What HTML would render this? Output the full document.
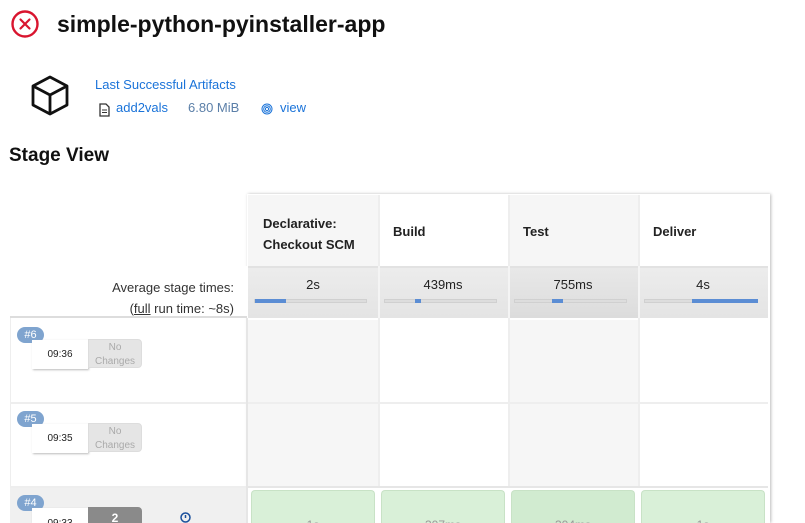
<!DOCTYPE html>
<html><head><style>
*{margin:0;padding:0;box-sizing:border-box}
html,body{width:805px;height:523px;overflow:hidden}
body{background:#fff;font-family:"Liberation Sans",sans-serif;position:relative;color:#222}
.a{position:absolute}
.link{color:#1a73d9}
.hd{font-weight:bold;font-size:13px;color:#222}
.track{position:absolute;height:4px;background:#ddd;border:1px solid #d0d0d0}
.fill{position:absolute;height:4px;background:#5b8dd4;top:-1px}
.badge{position:absolute;left:17px;width:27px;height:16px;border-radius:8px;background:#7fa4cf;color:#fff;font-size:11px;text-align:center;line-height:16px}
.time{position:absolute;left:32px;width:56px;height:29px;background:#fff;box-shadow:1px 1px 2px #bbb;font-size:10px;text-align:center;line-height:29px;color:#222}
.nc{position:absolute;left:88px;width:54px;height:29px;background:#e5e5e5;border-radius:0 4px 4px 0;color:#aaa;font-size:10px;text-align:center;line-height:14px;padding-top:1px;border:1px solid #ddd}
.cell{position:absolute;height:84px}
.g{position:absolute;height:33px;overflow:hidden;background:#d9f0d8;border:1px solid #c8e2c6;border-bottom:none;border-radius:4px 4px 0 0;color:#999;font-size:12px;text-align:center;padding-top:27px}
</style></head><body>
<svg class="a" style="left:10px;top:9px" width="30" height="30" viewBox="0 0 30 30"><circle cx="15" cy="15" r="12.5" fill="none" stroke="#d9152f" stroke-width="2.4"/><path d="M10.5 10.5l9 9M19.5 10.5l-9 9" stroke="#d9152f" stroke-width="2.2" stroke-linecap="round"/></svg>
<div class="a" style="left:57px;top:11px;font-size:23px;font-weight:bold;color:#111">simple-python-pyinstaller-app</div>
<svg class="a" style="left:29px;top:74px" width="42" height="42" viewBox="0 0 42 42"><path d="M21 3L38 12V31L21 40L4 31V12Z M4 12L21 21L38 12 M21 21V40" fill="none" stroke="#111" stroke-width="2.8" stroke-linejoin="round"/></svg>
<div class="a link" style="left:95px;top:77px;font-size:13px">Last Successful Artifacts</div>
<svg class="a" style="left:99px;top:103px" width="11" height="14" viewBox="0 0 11 14"><path d="M1 1H7L10 4V13H1Z" fill="none" stroke="#333" stroke-width="1.3"/><path d="M3 7h5M3 9.5h5" stroke="#333"/></svg>
<div class="a link" style="left:116px;top:100px;font-size:13px">add2vals</div>
<div class="a" style="left:188px;top:100px;font-size:13px;color:#5b7fa8">6.80 MiB</div>
<svg class="a" style="left:261px;top:102px" width="12" height="14" viewBox="0 0 12 14"><g fill="none" stroke="#1a73d9" stroke-width="1"><circle cx="6" cy="7" r="5"/><circle cx="6" cy="7" r="3.3"/><circle cx="6" cy="7" r="1.6"/></g></svg>
<div class="a link" style="left:280px;top:100px;font-size:13px">view</div>
<div class="a" style="left:9px;top:145px;font-size:19px;font-weight:bold;color:#111">Stage View</div>

<div class="a" style="left:247px;top:194px;width:523px;height:329px;box-shadow:1px 0 3px #bbb"></div>
<div class="a" style="left:248px;top:195px;width:130px;height:71px;background:#f6f6f6"></div>
<div class="a" style="left:378px;top:195px;width:130px;height:71px;background:#fff;border-left:2px solid #eee"></div>
<div class="a" style="left:508px;top:195px;width:130px;height:71px;background:#f6f6f6;border-left:2px solid #eee"></div>
<div class="a" style="left:638px;top:195px;width:130px;height:71px;background:#fff;border-left:2px solid #eee"></div>
<div class="a hd" style="left:263px;top:213px;line-height:21px">Declarative:<br>Checkout SCM</div>
<div class="a hd" style="left:393px;top:224px">Build</div>
<div class="a hd" style="left:523px;top:224px">Test</div>
<div class="a hd" style="left:653px;top:224px">Deliver</div>

<div class="a" style="left:10px;top:266px;width:237px;height:52px;background:#fff;border-bottom:2px solid #ddd"></div>
<div class="a" style="left:10px;top:277px;width:224px;text-align:right;font-size:13px;line-height:21px;color:#333">Average stage times:<br>(<u>full</u> run time: ~8s)</div>
<div class="a" style="left:248px;top:266px;width:520px;height:52px;background:linear-gradient(#ececec,#e4e4e4);border-top:2px solid #e2e2e2"></div>
<div class="a" style="left:508px;top:268px;width:130px;height:50px;background:linear-gradient(#e8e8e8,#dcdcdc)"></div>
<div class="a" style="left:378px;top:266px;width:2px;height:52px;background:#f4f4f4"></div>
<div class="a" style="left:508px;top:266px;width:2px;height:52px;background:#f4f4f4"></div>
<div class="a" style="left:638px;top:266px;width:2px;height:52px;background:#f4f4f4"></div>
<div class="a" style="left:248px;top:277px;width:130px;text-align:center;font-size:13px">2s</div>
<div class="a" style="left:378px;top:277px;width:130px;text-align:center;font-size:13px">439ms</div>
<div class="a" style="left:508px;top:277px;width:130px;text-align:center;font-size:13px">755ms</div>
<div class="a" style="left:638px;top:277px;width:130px;text-align:center;font-size:13px">4s</div>
<div class="track" style="left:254px;top:299px;width:113px"><div class="fill" style="left:0;width:31px"></div></div>
<div class="track" style="left:384px;top:299px;width:113px"><div class="fill" style="left:30px;width:6px"></div></div>
<div class="track" style="left:514px;top:299px;width:113px"><div class="fill" style="left:37px;width:11px"></div></div>
<div class="track" style="left:644px;top:299px;width:113px"><div class="fill" style="left:47px;width:66px"></div></div>

<div class="a" style="left:10px;top:318px;width:237px;height:86px;border-bottom:2px solid #eee;border-left:1px solid #eee"></div>
<div class="a" style="left:10px;top:402px;width:237px;height:86px;border-bottom:2px solid #eee;border-left:1px solid #eee"></div>
<div class="a" style="left:10px;top:488px;width:237px;height:35px;background:#f0f0f0"></div>
<div class="cell" style="left:248px;top:320px;width:130px;background:#f6f6f6"></div>
<div class="cell" style="left:380px;top:320px;width:128px;background:#fff"></div>
<div class="cell" style="left:510px;top:320px;width:128px;background:#f6f6f6"></div>
<div class="cell" style="left:640px;top:320px;width:128px;background:#fff"></div>
<div class="a" style="left:248px;top:402px;width:520px;height:2px;background:#eee"></div>
<div class="cell" style="left:248px;top:404px;width:130px;background:#f6f6f6;height:82px"></div>
<div class="cell" style="left:380px;top:404px;width:128px;background:#fff;height:82px"></div>
<div class="cell" style="left:510px;top:404px;width:128px;background:#f6f6f6;height:82px"></div>
<div class="cell" style="left:640px;top:404px;width:128px;background:#fff;height:82px"></div>
<div class="a" style="left:248px;top:486px;width:520px;height:2px;background:#e6e6e6"></div>
<div class="a" style="left:378px;top:318px;width:2px;height:168px;background:#eee"></div>
<div class="a" style="left:508px;top:318px;width:2px;height:168px;background:#eee"></div>
<div class="a" style="left:638px;top:318px;width:2px;height:168px;background:#eee"></div>
<div class="a" style="left:246px;top:318px;width:2px;height:205px;background:#e6e6e6"></div>

<div class="badge" style="top:327px">#6</div>
<div class="time" style="top:340px">09:36</div>
<div class="nc" style="top:339px">No<br>Changes</div>
<div class="badge" style="top:411px">#5</div>
<div class="time" style="top:424px">09:35</div>
<div class="nc" style="top:423px">No<br>Changes</div>
<div class="badge" style="top:495px">#4</div>
<div class="time" style="top:508px;height:15px;overflow:hidden;line-height:12px;padding-top:10px">09:33</div>
<div class="a" style="left:88px;top:507px;width:54px;height:16px;overflow:hidden;background:#8a8a8a;border-radius:0 4px 0 0;color:#fff;font-size:12px;text-align:center;font-weight:bold;padding-top:5px;line-height:12px">2</div>
<svg class="a" style="left:180px;top:512px" width="11" height="11" viewBox="0 0 11 11"><circle cx="5.5" cy="5.5" r="4.5" fill="none" stroke="#1a4f9c" stroke-width="1.5"/><path d="M5.5 3v3" stroke="#1a4f9c" stroke-width="1.5"/></svg>

<div class="g" style="left:251px;top:490px;width:124px">1s</div>
<div class="g" style="left:381px;top:490px;width:124px">307ms</div>
<div class="g" style="left:511px;top:490px;width:124px;background:#d1ebd0">304ms</div>
<div class="g" style="left:641px;top:490px;width:124px">1s</div>
</body></html>
